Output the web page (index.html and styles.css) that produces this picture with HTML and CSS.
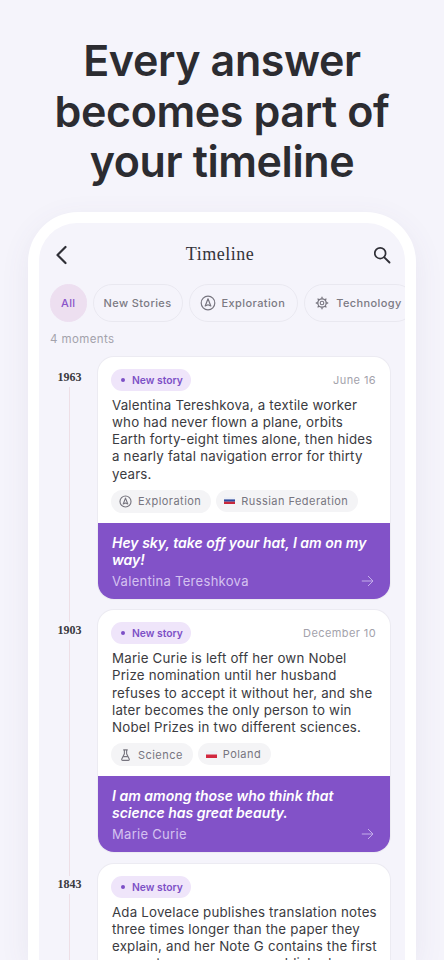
FILE: index.html
```html
<!DOCTYPE html>
<html lang="en">
<head>
<meta charset="utf-8">
<title>Timeline</title>
<link rel="stylesheet" href="styles.css">
</head>
<body>
<h1 class="headline">Every answer becomes part of your timeline</h1>
<div class="phone">
  <div class="screen">
    <header class="topbar">
      <svg class="back" width="12" height="20" viewBox="0 0 12 20"><path d="M10.500 2 2.500 10l8 8" fill="none" stroke="#2f2f36" stroke-width="2.200" stroke-linecap="round" stroke-linejoin="round"/></svg>
      <div class="title">Timeline</div>
      <svg class="search" width="18" height="18" viewBox="0 0 18 18"><circle cx="7.200" cy="7.200" r="5.400" fill="none" stroke="#2f2f36" stroke-width="1.700"/><path d="m11.300 11.300 5.200 5.200" stroke="#2f2f36" stroke-width="1.900" stroke-linecap="round"/></svg>
    </header>
    <div class="chips">
      <div class="chip chip-all">All</div>
      <div class="chip">New Stories</div>
      <div class="chip chip-icon">
        <svg width="16" height="16" viewBox="0 0 16 16"><circle cx="8" cy="8" r="6.800" fill="none" stroke="#77757f" stroke-width="1.200"/><path d="M8 3.800 10.800 11 8 9.800 5.200 11z" fill="none" stroke="#77757f" stroke-width="1.200" stroke-linejoin="round"/></svg>
        Exploration
      </div>
      <div class="chip chip-icon chip-tech">
        <svg width="14" height="14" viewBox="0 0 14 14"><circle cx="7" cy="7" r="4.200" fill="none" stroke="#77757f" stroke-width="1.300"/><circle cx="7" cy="7" r="1.800" fill="none" stroke="#77757f" stroke-width="1.100"/><path d="M7 .8v2M7 11.200v2M.8 7h2M11.200 7h2M2.600 2.600 4 4M10 10l1.400 1.400M2.600 11.400 4 10M10 4l1.400-1.400" stroke="#77757f" stroke-width="1.300"/></svg>
        Technology
      </div>
    </div>
    <div class="count">4 moments</div>
    <div class="timeline">
      <article class="moment">
        <div class="rail"><div class="year">1963</div><div class="rail-line"></div></div>
        <div class="card">
          <div class="card-body">
            <div class="meta"><span class="badge"><i class="dot"></i>New story</span><span class="date">June 16</span></div>
            <p class="story">Valentina Tereshkova, a textile worker who had never flown a plane, orbits Earth forty-eight times alone, then hides a nearly fatal navigation error for thirty years.</p>
            <div class="tags">
              <span class="tag"><svg width="13" height="13" viewBox="0 0 16 16"><circle cx="8" cy="8" r="6.800" fill="none" stroke="#77757f" stroke-width="1.400"/><path d="M8 3.800 10.800 11 8 9.800 5.200 11z" fill="none" stroke="#77757f" stroke-width="1.400" stroke-linejoin="round"/></svg>Exploration</span>
              <span class="tag tag-flag"><svg width="11" height="7" viewBox="0 0 11 7"><rect width="11" height="2.400" fill="#eef0f6"/><rect y="2.400" width="11" height="2.300" fill="#2b4a9e"/><rect y="4.700" width="11" height="2.300" fill="#c8283c"/></svg>Russian Federation</span>
            </div>
          </div>
          <div class="quote">
            <div class="quote-text">Hey sky, take off your hat, I am on my way!</div>
            <div class="quote-foot"><span class="author">Valentina Tereshkova</span><svg width="13" height="12" viewBox="0 0 13 12"><path d="M.8 6h11M7 1l5 5-5 5" fill="none" stroke="#c4aeea" stroke-width="1"/></svg></div>
          </div>
        </div>
      </article>
      <article class="moment">
        <div class="rail"><div class="year">1903</div><div class="rail-line"></div></div>
        <div class="card">
          <div class="card-body">
            <div class="meta"><span class="badge"><i class="dot"></i>New story</span><span class="date">December 10</span></div>
            <p class="story">Marie Curie is left off her own Nobel Prize nomination until her husband refuses to accept it without her, and she later becomes the only person to win Nobel Prizes in two different sciences.</p>
            <div class="tags">
              <span class="tag"><svg width="13" height="14" viewBox="0 0 14 14"><path d="M5 1.500h4M5.800 1.500v4.200L3 11.300c-.4.800.1 1.500 1 1.500h6c.9 0 1.400-.7 1-1.500L8.200 5.700V1.500M4.400 8.800h5.200" fill="none" stroke="#77757f" stroke-width="1.200" stroke-linecap="round"/></svg>Science</span>
              <span class="tag tag-flag"><svg width="11" height="7" viewBox="0 0 11 7"><rect width="11" height="3.500" fill="#eef0f6"/><rect y="3.500" width="11" height="3.500" fill="#d2283f"/></svg>Poland</span>
            </div>
          </div>
          <div class="quote">
            <div class="quote-text">I am among those who think that science has great beauty.</div>
            <div class="quote-foot"><span class="author">Marie Curie</span><svg width="13" height="12" viewBox="0 0 13 12"><path d="M.8 6h11M7 1l5 5-5 5" fill="none" stroke="#c4aeea" stroke-width="1"/></svg></div>
          </div>
        </div>
      </article>
      <article class="moment">
        <div class="rail"><div class="year">1843</div><div class="rail-line"></div></div>
        <div class="card">
          <div class="card-body">
            <div class="meta"><span class="badge"><i class="dot"></i>New story</span></div>
            <p class="story">Ada Lovelace publishes translation notes three times longer than the paper they explain, and her Note G contains the first computer program ever published.</p>
          </div>
        </div>
      </article>
    </div>
  </div>
</div>
</body>
</html>
```
FILE: styles.css
```css
* { box-sizing: border-box; }
html, body { margin: 0; height: 960px; overflow: hidden; }
body {
  background: #f5f4fb;
  font-family: Inter, "Liberation Sans", sans-serif;
  color: #2f2f36;
  display: flex;
  flex-direction: column;
  align-items: center;
}
.headline {
  margin: 35px 0 0;
  width: 400px;
  text-align: center;
  font-size: 43px;
  line-height: 50.500px;
  font-weight: 600;
  letter-spacing: -.4px;
  color: #2c2c31;
}
.phone {
  margin-top: 25px;
  width: 388px;
  flex: 1;
  min-height: 0;
  background: #fff;
  border-radius: 50px 50px 0 0;
  padding: 11px 11px 0;
  box-shadow: 0 8px 30px rgba(90, 80, 130, .08);
}
.screen {
  height: 100%;
  background: #f5f4fb;
  border-radius: 38px 38px 0 0;
  overflow: hidden;
}
.topbar {
  display: flex;
  align-items: center;
  justify-content: space-between;
  height: 61px;
  padding: 3px 14px 0 16px;
}
.title {
  font-family: "Liberation Serif", serif;
  font-size: 18px;
  letter-spacing: .5px;
  color: #33333a;
}
.chips {
  display: flex;
  gap: 6px;
  padding-left: 11px;
  white-space: nowrap;
  overflow: hidden;
}
.chip {
  flex: none;
  display: flex;
  align-items: center;
  gap: 6px;
  height: 38px;
  padding: 0 10px;
  border: 1px solid #e9e8f0;
  border-radius: 19px;
  font-size: 11px;
  font-weight: 500;
  letter-spacing: .4px;
  color: #7c7a84;
}
.chip-icon { padding: 0 12px 0 10px; }
.chip-tech { gap: 7px; }
.chip-all {
  background: #eddff0;
  border-color: #eddff0;
  color: #8a55c9;
  padding: 0 10px;
}
.count {
  margin: 10px 0 11px 11px;
  font-size: 11.500px;
  line-height: 14px;
  letter-spacing: .4px;
  color: #a3a2ab;
}
.timeline {
  display: flex;
  flex-direction: column;
  padding: 0 15px 0 11px;
}
.moment {
  display: grid;
  grid-template-columns: 48px 1fr;
}
.rail {
  display: flex;
  flex-direction: column;
  width: 39px;
  align-items: center;
}
.moment + .moment .rail::before {
  content: "";
  width: 1.500px;
  height: 12px;
  background: #eedfe6;
}
.year {
  padding-top: 14px;
  font-family: "Liberation Serif", serif;
  font-size: 12px;
  line-height: 13px;
  font-weight: 700;
  color: #3a3a40;
}
.moment + .moment .year { padding-top: 2px; }
.rail-line {
  flex: 1;
  width: 1.500px;
  margin-top: 3px;
  background: #eedfe6;
}
.card {
  margin-bottom: 11.250px;
  background: #fff;
  box-shadow: 0 0 0 1px #ecebf2;
  border-radius: 16px;
  overflow: hidden;
}
.card-body { padding: 12px 14px 10px 13px; }
.meta {
  display: flex;
  align-items: center;
  justify-content: space-between;
}
.badge {
  display: flex;
  align-items: center;
  gap: 7px;
  height: 22px;
  padding: 0 8px 0 10px;
  border-radius: 11px;
  background: #efe5fa;
  color: #7d50c6;
  font-size: 10.300px;
  font-weight: 600;
}
.dot {
  width: 4px;
  height: 4px;
  border-radius: 50%;
  background: #7d50c6;
}
.date {
  font-size: 11px;
  letter-spacing: .4px;
  color: #a3a2ab;
}
.story {
  margin: 6px -4px 7px 1px;
  font-size: 13.300px;
  line-height: 17.250px;
  letter-spacing: .2px;
  color: #3b3b41;
}
.tags {
  display: flex;
  gap: 5px;
  align-items: flex-start;
}
.tag {
  display: flex;
  align-items: center;
  gap: 6px;
  height: 23px;
  padding: 0 10px 0 8px;
  border-radius: 12px;
  background: #f4f4f6;
  font-size: 11px;
  letter-spacing: .45px;
  color: #77757f;
}
.tag-flag { height: 22px; }
.quote {
  background: #8252c8;
  padding: 11px 16px 10px 14px;
  color: #fff;
}
.quote-text {
  font-size: 14px;
  line-height: 17px;
  font-style: italic;
  font-weight: 600;
}
.quote-foot {
  display: flex;
  align-items: center;
  justify-content: space-between;
  margin-top: 5px;
  font-size: 13px;
  line-height: 16px;
  letter-spacing: .3px;
  color: #d5c2f0;
}
```
